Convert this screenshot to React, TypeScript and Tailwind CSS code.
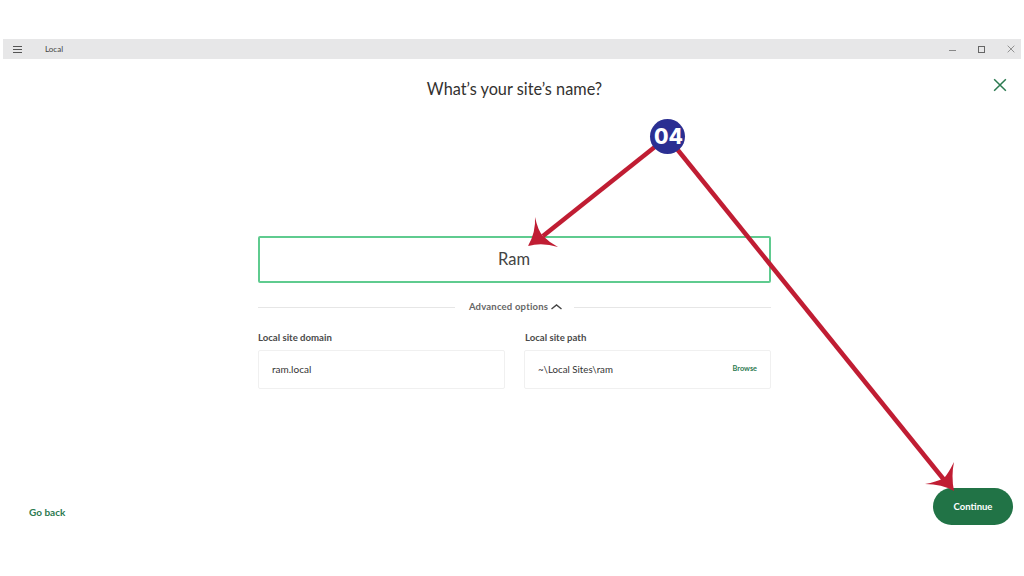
const Arrows = () => (
  <svg
    className="pointer-events-none absolute left-0 top-0"
    width="1024"
    height="576"
    viewBox="0 0 1024 576"
  >
    <path d="M656 146 L543 236" stroke="#c01d33" strokeWidth="4.5" fill="none" />
    <path d="M677 149 L945 481" stroke="#c01d33" strokeWidth="4.5" fill="none" />
    <path d="M535 217 Q538 231 543 236 Q550 243 558 247 Q542 242 528 246 Q536 232 535 217 Z" fill="#c01d33" />
    <path d="M954 462 Q948 474 944 478 Q936 482 925 484 Q942 484 954 491 Q951 476 954 462 Z" fill="#c01d33" />
  </svg>
);

const IconX = ({ size, width, className }: { size: number; width: number; className?: string }) => (
  <svg width={size} height={size} viewBox="0 0 12 12" className={className} fill="none" stroke="currentColor" strokeWidth={width}>
    <path d="M1 1 L11 11 M11 1 L1 11" />
  </svg>
);

export default function App() {
  return (
    <div className="relative flex h-[576px] w-[1024px] flex-col overflow-hidden bg-white pt-[39px] font-['Lato',sans-serif] text-[#3a3a3a]">
      <div className="ml-[3px] mr-[3px] flex h-[20px] shrink-0 items-center bg-[#e7e7e8] pl-[10px] pr-[6px]">
        <svg width="9" height="7" viewBox="0 0 9 7" className="text-[#555]" stroke="currentColor" strokeWidth="1">
          <path d="M0 .5 H9 M0 3.5 H9 M0 6.5 H9" />
        </svg>
        <span className="ml-[23px] text-[8px] text-[#444]">Local</span>
        <div className="ml-auto flex items-center gap-[22px] text-[#666]">
          <div className="mt-[3px] h-px w-[7px] bg-[#888]" />
          <div className="h-[7px] w-[7px] border border-[#666]" />
          <IconX size={8} width={1} />
        </div>
      </div>

      <div className="relative flex flex-1 flex-col items-center">
        <h1 className="mt-[20px] pl-[5px] text-[16.3px] leading-[20px] font-normal text-[#33312f]">
          What’s your site’s name?
        </h1>
        <IconX size={14} width={1.3} className="absolute right-[17px] top-[19px] text-[#2b7a50]" />

        <div className="ml-[5px] mt-[137px] flex w-[513px] flex-col">
          <div className="flex h-[47px] items-center justify-center rounded-[2px] border-2 border-[#5fcb8f] pr-[1px] text-[16.5px] text-[#444]">
            Ram
          </div>

          <div className="mt-[18px] flex h-[12px] items-center">
            <div className="h-px flex-1 bg-[#e6e6e6]" />
            <div className="ml-[14px] mr-[12px] flex items-center gap-[3px] text-[9.5px] font-bold tracking-[0.2px] text-[#666]">
              Advanced options
              <svg width="11" height="6" viewBox="0 0 11 6" fill="none" stroke="#444" strokeWidth="1.4">
                <path d="M.5 5 L5.5 1 L10.5 5" />
              </svg>
            </div>
            <div className="h-px flex-1 bg-[#e6e6e6]" />
          </div>

          <div className="mt-[18px] grid grid-cols-[247px_247px] gap-x-[19px]">
            <div className="flex flex-col gap-[6px]">
              <span className="text-[9.6px] leading-[13px] font-bold text-[#4a4a4a]">
                Local site domain
              </span>
              <div className="flex h-[39px] items-center rounded-[2px] border border-[#f0f0f0] pb-[1px] pl-[13px] text-[10px] text-[#333]">
                ram.local
              </div>
            </div>
            <div className="flex flex-col gap-[6px]">
              <span className="pl-[1px] text-[9.6px] leading-[13px] font-bold text-[#4a4a4a]">
                Local site path
              </span>
              <div className="flex h-[39px] items-center justify-between rounded-[2px] border border-[#f0f0f0] px-[13px] pb-[1px] text-[9.7px] text-[#333]">
                ~\Local Sites\ram
                <span className="text-[7.3px] font-bold text-[#2b7a50]">Browse</span>
              </div>
            </div>
          </div>
        </div>

        <div className="mt-auto mb-[51px] flex w-full items-end justify-between pl-[29px] pr-[11px]">
          <span className="mb-[7px] text-[10px] leading-[12px] font-bold text-[#2b7a50]">Go back</span>
          <button className="flex h-[37px] w-[80px] items-center justify-center rounded-full bg-[#217346] pt-[1px] text-[9.5px] font-bold text-white">
            Continue
          </button>
        </div>
      </div>

      <Arrows />
      <div className="absolute left-[650px] top-[119px] flex h-[35px] w-[35px] items-center justify-center rounded-full bg-[#2b2f92] pl-[2px] font-['Inter',sans-serif] text-[21px] font-extrabold text-white">
        04
      </div>
    </div>
  );
}
